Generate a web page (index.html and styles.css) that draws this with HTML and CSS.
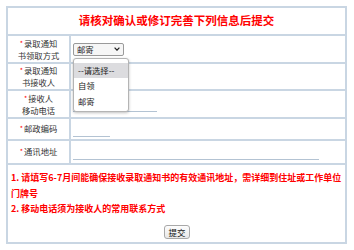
FILE: index.html
```html
<!DOCTYPE html>
<html lang="zh-CN">
<head>
<meta charset="utf-8">
<title>信息确认</title>
<link rel="stylesheet" href="styles.css">
</head>
<body>
<form class="form">
  <div class="cell title">请核对确认或修订完善下列信息后提交</div>

  <div class="cell label"><span class="label-text"><span class="req">*</span>录取通知<br>书领取方式</span></div>
  <div class="cell value">
    <div class="select-wrap">
      <div class="select"><span>邮寄</span><svg class="chev" width="6" height="4" viewBox="0 0 6 4"><polyline points="0.6,0.6 3,3.2 5.4,0.6" fill="none" stroke="#222" stroke-width="1.2"/></svg></div>
      <ul class="dropdown">
        <li class="opt active">--请选择--</li>
        <li class="opt">自领</li>
        <li class="opt">邮寄</li>
      </ul>
    </div>
  </div>

  <div class="cell label"><span class="label-text"><span class="req">*</span>录取通知<br>书接收人</span></div>
  <div class="cell value"><input class="field field-short" type="text"></div>

  <div class="cell label"><span class="label-text"><span class="req">*</span>接收人<br>移动电话</span></div>
  <div class="cell value"><input class="field field-mid" type="text"></div>

  <div class="cell label"><span class="label-text"><span class="req">*</span>邮政编码</span></div>
  <div class="cell value"><input class="field field-short" type="text"></div>

  <div class="cell label"><span class="label-text"><span class="req">*</span>通讯地址</span></div>
  <div class="cell value"><input class="field field-long" type="text"></div>

  <div class="cell notes">
    <p>1. 请填写6-7月间能确保接收录取通知书的有效通讯地址，需详细到住址或工作单位门牌号</p>
    <p>2. 移动电话须为接收人的常用联系方式</p>
    <div class="actions"><button class="btn" type="button">提交</button></div>
  </div>
</form>
</body>
</html>
```

FILE: styles.css
```css
html, body {
  margin: 0;
  padding: 0;
  background: #fff;
}
body {
  font-family: "Noto Sans CJK SC", "Noto Sans", sans-serif;
  color: #333;
}
.form {
  box-sizing: border-box;
  margin: 6px;
  width: 341px;
  padding: 2px;
  background: #c9d6e3;
  display: grid;
  grid-template-columns: 61px 1fr;
  grid-template-rows: 26px 26px 25px 26px 20px 22px 77px;
  gap: 2px;
}
.cell {
  background: #fff;
  min-width: 0;
}
.title {
  grid-column: 1 / 3;
  display: flex;
  align-items: center;
  justify-content: center;
  color: #f00;
  font-weight: bold;
  font-size: 11.5px;
  line-height: 1;
}
.label {
  display: flex;
  align-items: center;
  justify-content: center;
  text-align: center;
  font-size: 8.3px;
  line-height: 11px;
  color: #333;
}
.label-text {
  display: block;
}
.req {
  color: #f00;
  font-size: 7px;
  margin-right: 1px;
  position: relative;
  top: -1px;
}
.value {
  display: flex;
  align-items: center;
  padding-left: 2px;
}
.select-wrap {
  position: relative;
}
.select {
  box-sizing: border-box;
  width: 51px;
  height: 13px;
  border: 1px solid #9a9a9a;
  border-radius: 2px;
  background: #f6f6f6;
  display: flex;
  align-items: center;
  justify-content: space-between;
  padding: 0 3px 0 3px;
  font-size: 8.3px;
  color: #222;
  line-height: 1;
}
.chev {
  display: block;
}
.dropdown {
  position: absolute;
  z-index: 10;
  left: 0;
  top: 15px;
  box-sizing: border-box;
  width: 56px;
  height: 54px;
  margin: 0;
  padding: 4px 0 0 0;
  list-style: none;
  background: #fff;
  border: 1px solid #b4b4b4;
  border-radius: 3px;
  box-shadow: 0 1px 3px rgba(0, 0, 0, 0.25);
}
.opt {
  height: 15.5px;
  line-height: 15.5px;
  padding-left: 4px;
  font-size: 8.3px;
  color: #222;
}
.opt.active {
  background: #dcdcdf;
}
.field {
  box-sizing: border-box;
  height: 15px;
  padding: 0;
  margin: 0;
  border: 0;
  border-bottom: 1px solid #b3c3d3;
  background: transparent;
  outline: none;
}
.field-short { width: 37px; }
.field-mid { width: 84px; }
.field-long { width: 246px; }
.notes {
  grid-column: 1 / 3;
  padding: 5px 2px 3px 3px;
  color: #f00;
  font-weight: bold;
  font-size: 9px;
  line-height: 15.5px;
}
.notes p {
  margin: 0;
}
.actions {
  display: flex;
  justify-content: center;
  margin-top: 8px;
}
.btn {
  box-sizing: border-box;
  height: 14px;
  padding: 0 3px;
  font-family: "Noto Sans CJK SC", "Noto Sans", sans-serif;
  font-size: 8.5px;
  line-height: 12px;
  color: #111;
  border: 1px solid #a8a8a8;
  border-radius: 3px;
  background: linear-gradient(#fdfdfd, #e8e8e8);
}
```
